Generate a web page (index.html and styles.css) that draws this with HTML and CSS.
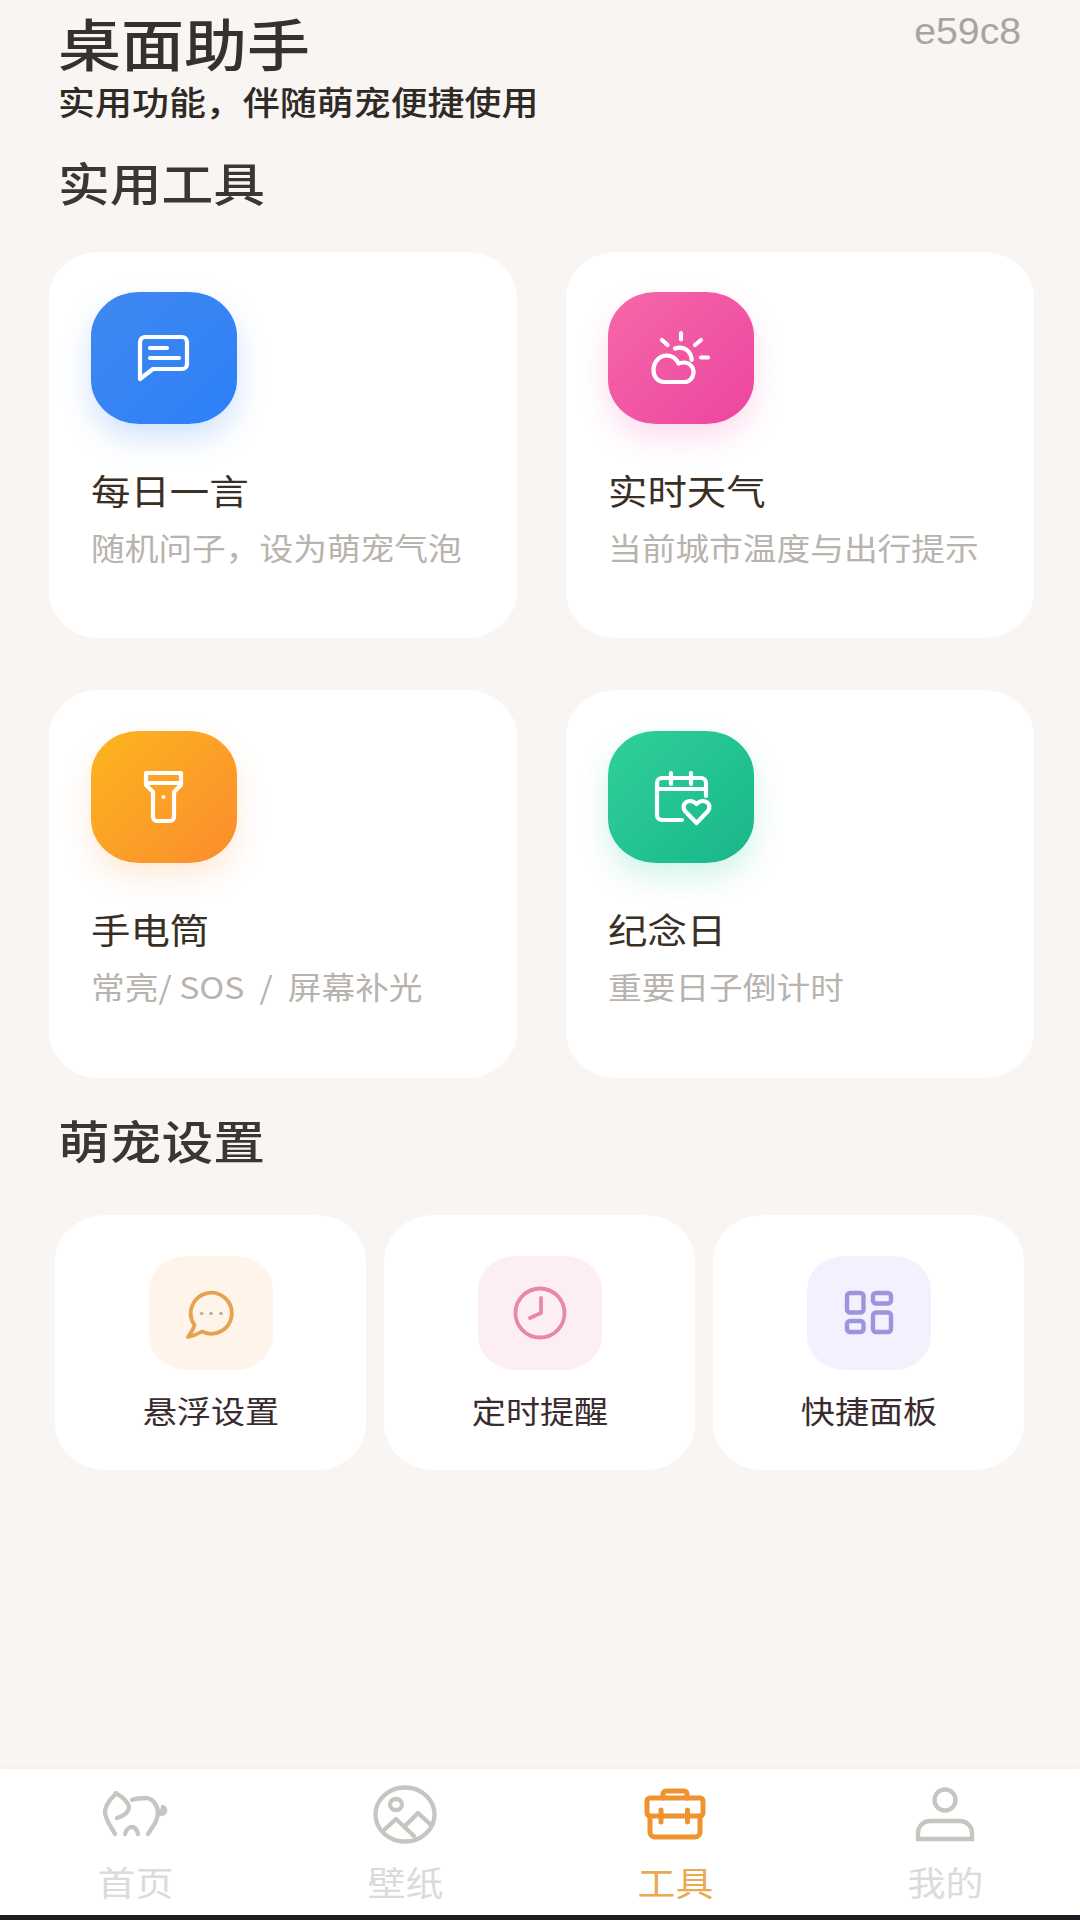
FILE: index.html
```html
<!DOCTYPE html>
<html lang="zh-CN">
<head>
<meta charset="utf-8">
<title>桌面助手</title>
<link rel="stylesheet" href="styles.css">
</head>
<body>
<div class="page">
  <main class="main">
    <header class="header">
      <div>
        <h1 class="title">桌面助手</h1>
        <p class="subtitle">实用功能，伴随萌宠便捷使用</p>
      </div>
      <span class="version">e59c8</span>
    </header>

    <h2 class="section section-first">实用工具</h2>
    <section class="tools">
      <article class="card">
        <div class="tile tile-blue">
          <svg width="56" height="52" viewBox="0 0 56 52" class="glyph"><path d="M4 47V10a5 5 0 0 1 5-5h37a5 5 0 0 1 5 5v22a5 5 0 0 1-5 5H17z"/><path d="M14 16h17M14 26h29"/></svg>
        </div>
        <h3 class="card-title">每日一言</h3>
        <p class="card-desc">随机问子，设为萌宠气泡</p>
      </article>
      <article class="card">
        <div class="tile tile-pink">
          <svg width="64" height="64" viewBox="0 0 64 64" class="glyph"><path d="M32 7v6.500M13 14l5.500 5M52 14l-6 5M52 31.500h7M26 22.500c8-3 16 2 16.700 11.500"/><path d="M15 56C9 56 4.500 51 4.500 44c0-8 6-14.500 13-14.500 6 0 10 3.500 12 8 1-1 3-1 5.500-1 5.500 0 9.500 4.500 9.500 9.500 0 5.500-4 10-9 10z"/></svg>
        </div>
        <h3 class="card-title">实时天气</h3>
        <p class="card-desc">当前城市温度与出行提示</p>
      </article>
      <article class="card">
        <div class="tile tile-orange">
          <svg width="56" height="64" viewBox="0 0 56 64" class="glyph"><path d="M10 8h35v12l-7 7v25a4 4 0 0 1-4 4H21a4 4 0 0 1-4-4V27l-7-7z"/><path d="M10 18h35"/><circle class="dot" cx="27.500" cy="32" r="2"/></svg>
        </div>
        <h3 class="card-title">手电筒</h3>
        <p class="card-desc">常亮/ SOS&nbsp; /&nbsp; 屏幕补光</p>
      </article>
      <article class="card">
        <div class="tile tile-green">
          <svg width="64" height="64" viewBox="0 0 64 64" class="glyph"><path d="M57 31V18a5 5 0 0 0-5-5H13a5 5 0 0 0-5 5v32a5 5 0 0 0 5 5h20M8 24h49M22 8v11M42 8v11"/><path d="M47.500 58 36 46c-5-7 4-14 11.500-7C55 32 64 39 59 46z"/></svg>
        </div>
        <h3 class="card-title">纪念日</h3>
        <p class="card-desc">重要日子倒计时</p>
      </article>
    </section>

    <h2 class="section section-second">萌宠设置</h2>
    <section class="settings">
      <article class="mini">
        <div class="mini-tile mini-orange">
          <svg width="52" height="52" viewBox="0 0 52 52" class="line line-orange"><path d="M9.500 38A20.500 20.500 0 1 1 17 44.500C13 47 8 49 3 50c3-4 5-6 6.500-12z"/><circle class="dots" cx="16.700" cy="26.500" r="1.800"/><circle class="dots" cx="26" cy="26.500" r="1.800"/><circle class="dots" cx="36" cy="26.500" r="1.800"/></svg>
        </div>
        <p class="mini-label">悬浮设置</p>
      </article>
      <article class="mini">
        <div class="mini-tile mini-pink">
          <svg width="56" height="56" viewBox="0 0 56 56" class="line line-pink"><circle cx="28" cy="28" r="24.500"/><path d="M29 13v15l-11 5"/></svg>
        </div>
        <p class="mini-label">定时提醒</p>
      </article>
      <article class="mini">
        <div class="mini-tile mini-violet">
          <svg width="52" height="48" viewBox="0 0 52 48" class="line line-violet"><rect x="4" y="4" width="16.500" height="19.500" rx="3"/><rect x="30" y="4" width="18" height="10.500" rx="3"/><rect x="4" y="32" width="16.500" height="11" rx="3"/><rect x="30" y="23.500" width="18" height="19.500" rx="3"/></svg>
        </div>
        <p class="mini-label">快捷面板</p>
      </article>
    </section>
  </main>

  <nav class="tabbar">
    <div class="tab">
      <div class="tab-icon"><svg width="70" height="52" viewBox="0 0 70 52" class="tab-svg"><path d="M15 46C10 37 5 31 5 24c0-5 3-9 5-12 2-2 4-4 6-7 2 2 5 3 7 5 3 3 6 6 6 9 0 6-6 9-12 11"/><path d="M32 12c5-2 10-2 15-2 6 1 10 7 11 13 0 10-5 15-10 23"/><path d="M25 46c1-4 4-7 7-7s5 3 6 7"/><path d="M58 24c3 0 5-2 5-5 3 2 3 6-1 7-2 0-3 0-4-1"/></svg></div>
      <span class="tab-label">首页</span>
    </div>
    <div class="tab">
      <div class="tab-icon"><svg width="70" height="64" viewBox="0 0 70 64" class="tab-svg"><ellipse cx="35" cy="32.500" rx="29.500" ry="27"/><ellipse cx="26" cy="22.500" rx="6" ry="5.500"/><path d="M14 48l12-11 18 17M36 43l12-12 13 12"/></svg></div>
      <span class="tab-label">壁纸</span>
    </div>
    <div class="tab tab-active">
      <div class="tab-icon"><svg width="70" height="56" viewBox="0 0 70 56" class="tab-svg tab-svg-active"><path d="M23 12V8a3 3 0 0 1 3-3h18a3 3 0 0 1 3 3v4"/><path d="M10 30H60a3 3 0 0 0 3-3V15a3 3 0 0 0-3-3H10a3 3 0 0 0-3 3v12a3 3 0 0 0 3 3z"/><path d="M10 30v16a5 5 0 0 0 5 5h40a5 5 0 0 0 5-5V30M21 24v12M47.500 24v12"/></svg></div>
      <span class="tab-label">工具</span>
    </div>
    <div class="tab">
      <div class="tab-icon"><svg width="70" height="56" viewBox="0 0 70 56" class="tab-svg tab-svg-flat"><circle cx="35" cy="14" r="10.500"/><path d="M8 53v-6a12 12 0 0 1 12-12h30a12 12 0 0 1 12 12v6z"/></svg></div>
      <span class="tab-label">我的</span>
    </div>
  </nav>
  <div class="home-strip"></div>
</div>
</body>
</html>
```

FILE: styles.css
```css
* { box-sizing: border-box; }
html, body { margin: 0; padding: 0; }
body {
  width: 1080px;
  height: 1920px;
  overflow: hidden;
  background: #f8f5f2;
  font-family: "Noto Sans CJK SC", "Noto Sans", sans-serif;
}
h1, h2, h3, p { margin: 0; font-weight: 400; }

.page { width: 1080px; height: 1920px; display: flex; flex-direction: column; }
.main { flex: 1; padding-top: 8px; }

.header { display: flex; justify-content: space-between; padding: 2px 59px 0 58px; }
.title {
  margin-top: -2px;
  font-size: 56px; line-height: 68px; font-weight: 500; color: #35312d;
  width: fit-content;
  transform: scaleX(1.125); transform-origin: left center;
}
.subtitle {
  margin-top: 3px;
  font-size: 33px; line-height: 44px; font-weight: 500; color: #2e2a26; white-space: nowrap;
  width: fit-content;
  transform: scaleX(1.12); transform-origin: left center;
}
.version {
  font-family: "Liberation Sans", sans-serif;
  font-size: 36px; line-height: 44px; color: #a8a5a0;
  transform: scaleX(1.09); transform-origin: right center;
}

.section {
  margin-left: 58px;
  width: fit-content;
  font-size: 46px; line-height: 60px; font-weight: 500; color: #3a3632;
  transform: scaleX(1.125); transform-origin: left center;
}
.section-first { margin-top: 28px; }
.section-second { margin-top: 31px; }

.tools {
  display: grid;
  grid-template-columns: 468px 468px;
  grid-template-rows: 386px 388px;
  column-gap: 49px;
  row-gap: 52px;
  margin: 41px 0 0 49px;
}
.card { padding: 40px 0 0 42px; background: #fff; border-radius: 50px / 46px; }
.card:nth-child(n+3) { padding-top: 41px; }

.tile {
  width: 146px; height: 132px;
  border-radius: 48px / 44px;
  display: flex; align-items: center; justify-content: center;
}
.tile-blue { background: linear-gradient(135deg, #4088f0, #2d7ff8); box-shadow: 0 14px 30px rgba(47, 127, 245, .22); }
.tile-pink { background: linear-gradient(135deg, #f668a8, #ec459f); box-shadow: 0 14px 30px rgba(236, 69, 159, .18); }
.tile-orange { background: linear-gradient(135deg, #fdb520, #fb8c2d); box-shadow: 0 14px 30px rgba(251, 140, 45, .18); }
.tile-green { background: linear-gradient(135deg, #30d09a, #18b68a); box-shadow: 0 14px 30px rgba(32, 200, 150, .2); }

.glyph { fill: none; stroke: #fff; stroke-width: 4.200; stroke-linecap: round; stroke-linejoin: round; }
.dot { fill: #fff; stroke: none; }

.card-title {
  margin-top: 41px;
  width: fit-content;
  font-size: 35.500px; line-height: 50px; color: #3a2f25; font-weight: 400;
  transform: scaleX(1.11); transform-origin: left center;
}
.card-desc {
  margin-top: 10px;
  width: fit-content;
  font-size: 30.500px; line-height: 44px; color: #b8b3ad; white-space: nowrap;
  transform: scaleX(1.105); transform-origin: left center;
}

.settings {
  display: grid;
  grid-template-columns: repeat(3, 311px);
  column-gap: 18px;
  margin: 46px 0 0 55px;
}
.mini {
  height: 255px; padding-top: 41px;
  background: #fff; border-radius: 50px / 46px;
  display: flex; flex-direction: column; align-items: center;
}
.mini-tile {
  width: 124px; height: 114px;
  border-radius: 38px / 34px;
  display: flex; align-items: center; justify-content: center;
}
.mini-orange { background: #fff4ea; }
.mini-pink { background: #fdeef4; }
.mini-violet { background: #f2f1fd; }

.line { fill: none; stroke-width: 3.800; stroke-linecap: round; stroke-linejoin: round; }
.line-orange { stroke: #e5a252; }
.line-pink { stroke: #e887ae; }
.line-violet { stroke: #9c94de; stroke-width: 4.400; }
.dots { fill: #c9ab92; stroke: none; }

.mini-label {
  margin-top: 18px;
  font-size: 31px; line-height: 44px; color: #3a2b2f; font-weight: 400;
  transform: scaleX(1.1);
}

.tabbar {
  height: 146px;
  padding-top: 13px;
  background: #fff;
  display: grid;
  grid-template-columns: repeat(4, 270px);
  box-shadow: 0 -2px 6px rgba(0, 0, 0, .025);
}
.tab { display: flex; flex-direction: column; align-items: center; }
.tab-icon { height: 64px; display: flex; align-items: center; justify-content: center; }
.tab-svg { fill: none; stroke: #c8c5c1; stroke-width: 4.300; stroke-linecap: round; stroke-linejoin: round; }
.tab-svg-active { stroke: #ee9330; stroke-width: 5; }
.tab-svg-flat { stroke-linecap: butt; stroke-linejoin: miter; }
.tab-label {
  margin-top: 13px;
  font-size: 34.500px; line-height: 44px; color: #dcdbd9;
  transform: scaleX(1.1);
}
.tab-active .tab-label { color: #eaa950; }

.home-strip { height: 5px; background: #1c1c22; }
```
